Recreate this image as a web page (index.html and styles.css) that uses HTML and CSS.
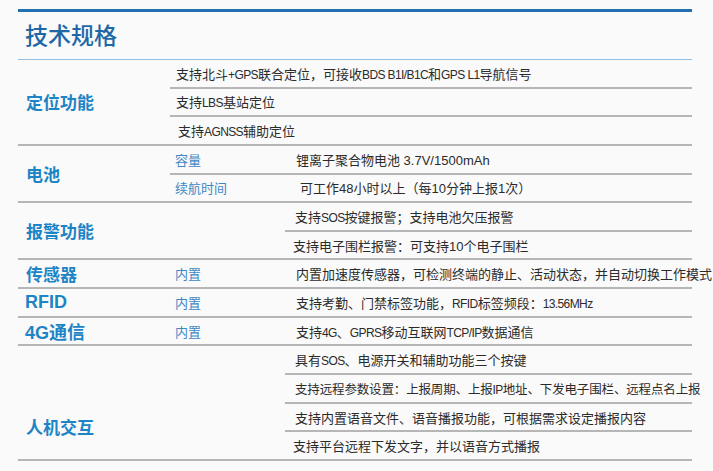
FILE: index.html
```html
<!DOCTYPE html>
<html lang="zh-CN">
<head>
<meta charset="utf-8">
<title>技术规格</title>
<link rel="stylesheet" href="styles.css">
</head>
<body>
<div class="page">
  <div class="topbar"></div>
  <h1 class="title">技术规格</h1>

  <div class="group">
    <div class="label">定位功能</div>
    <div class="body">
      <div class="sub"><span class="val">支持北斗<span class="lat">+GPS</span>联合定位，可接收<span class="lat">BDS B1I/B1C</span>和<span class="lat">GPS L1</span>导航信号</span></div>
      <div class="sub"><span class="val">支持<span class="lat">LBS</span>基站定位</span></div>
      <div class="sub"><span class="val shift">支持<span class="lat">AGNSS</span>辅助定位</span></div>
    </div>
  </div>

  <div class="group">
    <div class="label">电池</div>
    <div class="body">
      <div class="sub"><span class="key">容量</span><span class="val arial">锂离子聚合物电池 3.7V/1500mAh</span></div>
      <div class="sub"><span class="key">续航时间</span><span class="val arial shift">可工作48小时以上（每10分钟上报1次）</span></div>
    </div>
  </div>

  <div class="group">
    <div class="label">报警功能</div>
    <div class="body indent">
      <div class="sub"><span class="val">支持<span class="lat">SOS</span>按键报警；支持电池欠压报警</span></div>
      <div class="sub"><span class="val back arial">支持电子围栏报警：可支持10个电子围栏</span></div>
    </div>
  </div>

  <div class="group">
    <div class="label">传感器</div>
    <div class="body">
      <div class="sub"><span class="key">内置</span><span class="val">内置加速度传感器，可检测终端的静止、活动状态，并自动切换工作模式</span></div>
    </div>
  </div>

  <div class="group">
    <div class="label latin">RFID</div>
    <div class="body">
      <div class="sub"><span class="key">内置</span><span class="val">支持考勤、门禁标签功能，<span class="lat">RFID</span>标签频段：<span class="lat">13.56MHz</span></span></div>
    </div>
  </div>

  <div class="group">
    <div class="label latin">4G通信</div>
    <div class="body">
      <div class="sub"><span class="key">内置</span><span class="val">支持<span class="lat">4G</span>、<span class="lat">GPRS</span>移动互联网<span class="lat">TCP/IP</span>数据通信</span></div>
    </div>
  </div>

  <div class="group">
    <div class="label low">人机交互</div>
    <div class="body indent">
      <div class="sub"><span class="val">具有<span class="lat">SOS</span>、电源开关和辅助功能三个按键</span></div>
      <div class="sub"><span class="val tight">支持远程参数设置：上报周期、上报<span class="lat">IP</span>地址、下发电子围栏、远程点名上报</span></div>
      <div class="sub"><span class="val">支持内置语音文件、语音播报功能，可根据需求设定播报内容</span></div>
      <div class="sub"><span class="val back">支持平台远程下发文字，并以语音方式播报</span></div>
    </div>
  </div>
</div>
</body>
</html>
```

FILE: styles.css
```css
html, body {
  margin: 0;
  padding: 0;
  background: #fafafa;
}

body {
  font-family: "Noto Sans CJK SC", sans-serif;
  color: #2b2b2b;
  overflow: hidden;
}

.page {
  margin-left: 18px;
  width: 674px;
  padding-top: 9px;
}

.topbar {
  height: 3px;
  background: #2270b1;
}

.title {
  margin: 0;
  height: 48px;
  box-sizing: border-box;
  padding: 8px 0 0 7px;
  font-family: "Noto Sans CJK SC", sans-serif;
  font-size: 23px;
  font-weight: 500;
  line-height: 28px;
  color: #1f68a6;
  border-bottom: 1px solid #93bcdf;
}

.group {
  display: flex;
  border-bottom: 2px solid #b6b6b6;
}

.label {
  width: 152px;
  flex: none;
  box-sizing: border-box;
  padding-left: 8px;
  display: flex;
  align-items: center;
  font-family: "Noto Sans CJK SC", sans-serif;
  font-size: 17px;
  font-weight: 700;
  color: #1d84c5;
}

.label.latin {
  font-family: "Liberation Sans", "Noto Sans CJK SC", sans-serif;
  font-size: 18px;
  padding-left: 7px;
}

.label.low {
  align-items: flex-start;
  padding-top: 68px;
}

.body {
  flex: 1;
  min-width: 0;
}

.body.indent {
  margin-left: 115px;
}

.sub {
  height: 26.65px;
  display: flex;
  align-items: center;
  white-space: nowrap;
  font-size: 13px;
}

.sub + .sub {
  border-top: 2px solid #b6b6b6;
}

.key {
  width: 126px;
  flex: none;
  box-sizing: border-box;
  padding-left: 5px;
  color: #3f87c4;
}

.val {
  padding-left: 6px;
}

.key + .val {
  padding-left: 0;
}

.key + .val.shift {
  padding-left: 4px;
}

.val.shift {
  padding-left: 8px;
}

.indent .val {
  padding-left: 10px;
}

.indent .val.back {
  padding-left: 8px;
}

.val.tight {
  font-size: 12.5px;
  letter-spacing: -0.15px;
}

.lat {
  font-family: "Liberation Sans", "Noto Sans CJK SC", sans-serif;
  letter-spacing: -0.6px;
  font-size: 12px;
}

.arial {
  font-family: "Liberation Sans", "Noto Sans CJK SC", sans-serif;
}
```
